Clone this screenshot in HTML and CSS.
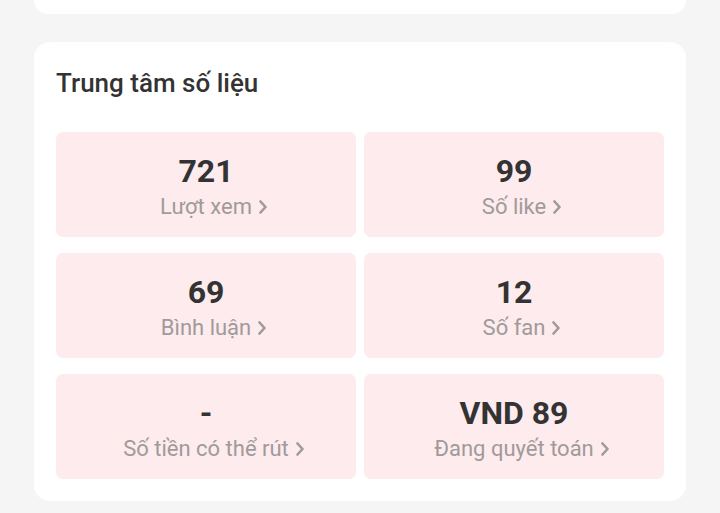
FILE: index.html
```html
<!DOCTYPE html>
<html lang="vi">
<head>
<meta charset="utf-8">
<link rel="stylesheet" href="styles.css">
</head>
<body>
<div class="card card-top"></div>
<section class="card stats">
  <h2 class="title">Trung tâm số liệu</h2>
  <div class="grid">
    <div class="tile"><div class="num">721</div><div class="label">Lượt xem<svg class="chev" viewBox="0 0 8 14"><polyline points="1.5,1.5 6.5,7 1.5,12.5"/></svg></div></div>
    <div class="tile"><div class="num">99</div><div class="label">Số like<svg class="chev" viewBox="0 0 8 14"><polyline points="1.5,1.5 6.5,7 1.5,12.5"/></svg></div></div>
    <div class="tile"><div class="num">69</div><div class="label">Bình luận<svg class="chev" viewBox="0 0 8 14"><polyline points="1.5,1.5 6.5,7 1.5,12.5"/></svg></div></div>
    <div class="tile"><div class="num">12</div><div class="label">Số fan<svg class="chev" viewBox="0 0 8 14"><polyline points="1.5,1.5 6.5,7 1.5,12.5"/></svg></div></div>
    <div class="tile"><div class="num">-</div><div class="label">Số tiền có thể rút<svg class="chev" viewBox="0 0 8 14"><polyline points="1.5,1.5 6.5,7 1.5,12.5"/></svg></div></div>
    <div class="tile"><div class="num">VND 89</div><div class="label">Đang quyết toán<svg class="chev" viewBox="0 0 8 14"><polyline points="1.5,1.5 6.5,7 1.5,12.5"/></svg></div></div>
  </div>
</section>
</body>
</html>
```
FILE: styles.css
```css
html, body {
  margin: 0;
  padding: 0;
  background: #f5f5f5;
  font-family: Roboto, "Noto Sans", sans-serif;
}
.card {
  background: #ffffff;
  margin: 0 34px;
}
.card-top {
  height: 14px;
  border-radius: 0 0 16px 16px;
}
.stats {
  margin-top: 28px;
  border-radius: 16px;
  padding: 24px 22px 22px;
}
.title {
  margin: 0;
  font-size: 26px;
  line-height: 34px;
  font-weight: 500;
  color: #333333;
}
.grid {
  margin-top: 32px;
  display: grid;
  grid-template-columns: 1fr 1fr;
  grid-auto-rows: 105px;
  column-gap: 8px;
  row-gap: 16px;
}
.tile {
  background: #fdebed;
  border-radius: 7px;
  padding-top: 21px;
  box-sizing: border-box;
  text-align: center;
}
.num {
  font-size: 32px;
  line-height: 36px;
  font-weight: 700;
  color: #333333;
}
.label {
  margin-top: 4px;
  font-size: 22px;
  line-height: 28px;
  color: #a09a9a;
  display: flex;
  justify-content: center;
  align-items: center;
}
.chev {
  width: 8px;
  height: 14px;
  margin-left: 7px;
  margin-right: -15px;
  fill: none;
  stroke: #a09a9a;
  stroke-width: 2.6;
  stroke-linecap: round;
  stroke-linejoin: round;
}
```
